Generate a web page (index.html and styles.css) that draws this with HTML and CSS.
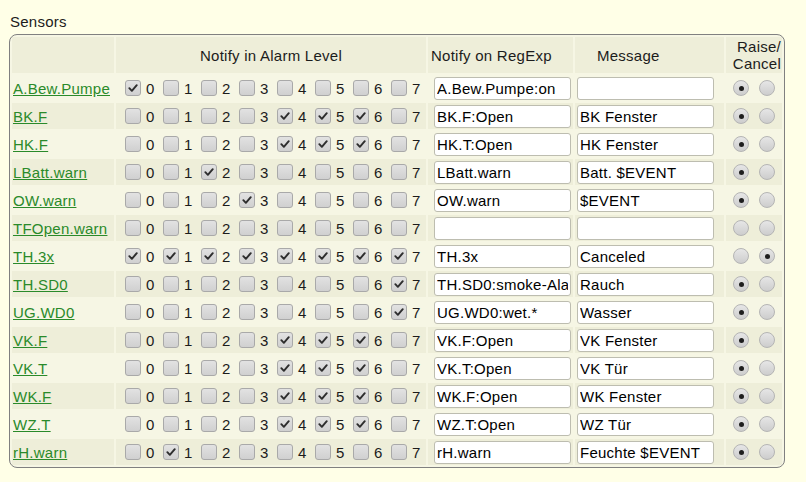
FILE: index.html
```html
<!DOCTYPE html>
<html>
<head>
<meta charset="utf-8">
<link rel="stylesheet" href="styles.css">
</head>
<body>
<div class="page">
<div class="title">Sensors</div>
<table class="block">
<colgroup><col class="w-name"><col class="w-lvl"><col class="w-re"><col class="w-msg"><col class="w-rc"></colgroup>
<tr class="head"><th></th><th class="h-lvl">Notify in Alarm Level</th><th class="h-re">Notify on RegExp</th><th class="h-msg">Message</th><th class="h-rc">Raise/<br>Cancel</th></tr>
<tr><td class="name"><a href="#">A.Bew.Pumpe</a></td><td><div class="levels"><label class="lv"><span class="cb on"><svg viewBox="0 0 16 16"><path d="M3.8 8.2l2.9 3L12.3 4.8"/></svg></span>0</label><label class="lv"><span class="cb"></span>1</label><label class="lv"><span class="cb"></span>2</label><label class="lv"><span class="cb"></span>3</label><label class="lv"><span class="cb"></span>4</label><label class="lv"><span class="cb"></span>5</label><label class="lv"><span class="cb"></span>6</label><label class="lv"><span class="cb"></span>7</label></div></td><td class="re"><input type="text" value="A.Bew.Pumpe:on"></td><td class="msg"><input type="text" value=""></td><td><div class="radios"><span class="rb on"></span><span class="rb"></span></div></td></tr>
<tr><td class="name"><a href="#">BK.F</a></td><td><div class="levels"><label class="lv"><span class="cb"></span>0</label><label class="lv"><span class="cb"></span>1</label><label class="lv"><span class="cb"></span>2</label><label class="lv"><span class="cb"></span>3</label><label class="lv"><span class="cb on"><svg viewBox="0 0 16 16"><path d="M3.8 8.2l2.9 3L12.3 4.8"/></svg></span>4</label><label class="lv"><span class="cb on"><svg viewBox="0 0 16 16"><path d="M3.8 8.2l2.9 3L12.3 4.8"/></svg></span>5</label><label class="lv"><span class="cb on"><svg viewBox="0 0 16 16"><path d="M3.8 8.2l2.9 3L12.3 4.8"/></svg></span>6</label><label class="lv"><span class="cb"></span>7</label></div></td><td class="re"><input type="text" value="BK.F:Open"></td><td class="msg"><input type="text" value="BK Fenster"></td><td><div class="radios"><span class="rb on"></span><span class="rb"></span></div></td></tr>
<tr><td class="name"><a href="#">HK.F</a></td><td><div class="levels"><label class="lv"><span class="cb"></span>0</label><label class="lv"><span class="cb"></span>1</label><label class="lv"><span class="cb"></span>2</label><label class="lv"><span class="cb"></span>3</label><label class="lv"><span class="cb on"><svg viewBox="0 0 16 16"><path d="M3.8 8.2l2.9 3L12.3 4.8"/></svg></span>4</label><label class="lv"><span class="cb on"><svg viewBox="0 0 16 16"><path d="M3.8 8.2l2.9 3L12.3 4.8"/></svg></span>5</label><label class="lv"><span class="cb on"><svg viewBox="0 0 16 16"><path d="M3.8 8.2l2.9 3L12.3 4.8"/></svg></span>6</label><label class="lv"><span class="cb"></span>7</label></div></td><td class="re"><input type="text" value="HK.T:Open"></td><td class="msg"><input type="text" value="HK Fenster"></td><td><div class="radios"><span class="rb on"></span><span class="rb"></span></div></td></tr>
<tr><td class="name"><a href="#">LBatt.warn</a></td><td><div class="levels"><label class="lv"><span class="cb"></span>0</label><label class="lv"><span class="cb"></span>1</label><label class="lv"><span class="cb on"><svg viewBox="0 0 16 16"><path d="M3.8 8.2l2.9 3L12.3 4.8"/></svg></span>2</label><label class="lv"><span class="cb"></span>3</label><label class="lv"><span class="cb"></span>4</label><label class="lv"><span class="cb"></span>5</label><label class="lv"><span class="cb"></span>6</label><label class="lv"><span class="cb"></span>7</label></div></td><td class="re"><input type="text" value="LBatt.warn"></td><td class="msg"><input type="text" value="Batt. $EVENT"></td><td><div class="radios"><span class="rb on"></span><span class="rb"></span></div></td></tr>
<tr><td class="name"><a href="#">OW.warn</a></td><td><div class="levels"><label class="lv"><span class="cb"></span>0</label><label class="lv"><span class="cb"></span>1</label><label class="lv"><span class="cb"></span>2</label><label class="lv"><span class="cb on"><svg viewBox="0 0 16 16"><path d="M3.8 8.2l2.9 3L12.3 4.8"/></svg></span>3</label><label class="lv"><span class="cb"></span>4</label><label class="lv"><span class="cb"></span>5</label><label class="lv"><span class="cb"></span>6</label><label class="lv"><span class="cb"></span>7</label></div></td><td class="re"><input type="text" value="OW.warn"></td><td class="msg"><input type="text" value="$EVENT"></td><td><div class="radios"><span class="rb on"></span><span class="rb"></span></div></td></tr>
<tr><td class="name"><a href="#">TFOpen.warn</a></td><td><div class="levels"><label class="lv"><span class="cb"></span>0</label><label class="lv"><span class="cb"></span>1</label><label class="lv"><span class="cb"></span>2</label><label class="lv"><span class="cb"></span>3</label><label class="lv"><span class="cb"></span>4</label><label class="lv"><span class="cb"></span>5</label><label class="lv"><span class="cb"></span>6</label><label class="lv"><span class="cb"></span>7</label></div></td><td class="re"><input type="text" value=""></td><td class="msg"><input type="text" value=""></td><td><div class="radios"><span class="rb"></span><span class="rb"></span></div></td></tr>
<tr><td class="name"><a href="#">TH.3x</a></td><td><div class="levels"><label class="lv"><span class="cb on"><svg viewBox="0 0 16 16"><path d="M3.8 8.2l2.9 3L12.3 4.8"/></svg></span>0</label><label class="lv"><span class="cb on"><svg viewBox="0 0 16 16"><path d="M3.8 8.2l2.9 3L12.3 4.8"/></svg></span>1</label><label class="lv"><span class="cb on"><svg viewBox="0 0 16 16"><path d="M3.8 8.2l2.9 3L12.3 4.8"/></svg></span>2</label><label class="lv"><span class="cb on"><svg viewBox="0 0 16 16"><path d="M3.8 8.2l2.9 3L12.3 4.8"/></svg></span>3</label><label class="lv"><span class="cb on"><svg viewBox="0 0 16 16"><path d="M3.8 8.2l2.9 3L12.3 4.8"/></svg></span>4</label><label class="lv"><span class="cb on"><svg viewBox="0 0 16 16"><path d="M3.8 8.2l2.9 3L12.3 4.8"/></svg></span>5</label><label class="lv"><span class="cb on"><svg viewBox="0 0 16 16"><path d="M3.8 8.2l2.9 3L12.3 4.8"/></svg></span>6</label><label class="lv"><span class="cb on"><svg viewBox="0 0 16 16"><path d="M3.8 8.2l2.9 3L12.3 4.8"/></svg></span>7</label></div></td><td class="re"><input type="text" value="TH.3x"></td><td class="msg"><input type="text" value="Canceled"></td><td><div class="radios"><span class="rb"></span><span class="rb on"></span></div></td></tr>
<tr><td class="name"><a href="#">TH.SD0</a></td><td><div class="levels"><label class="lv"><span class="cb"></span>0</label><label class="lv"><span class="cb"></span>1</label><label class="lv"><span class="cb"></span>2</label><label class="lv"><span class="cb"></span>3</label><label class="lv"><span class="cb"></span>4</label><label class="lv"><span class="cb"></span>5</label><label class="lv"><span class="cb"></span>6</label><label class="lv"><span class="cb on"><svg viewBox="0 0 16 16"><path d="M3.8 8.2l2.9 3L12.3 4.8"/></svg></span>7</label></div></td><td class="re"><input type="text" value="TH.SD0:smoke-Alarm"></td><td class="msg"><input type="text" value="Rauch"></td><td><div class="radios"><span class="rb on"></span><span class="rb"></span></div></td></tr>
<tr><td class="name"><a href="#">UG.WD0</a></td><td><div class="levels"><label class="lv"><span class="cb"></span>0</label><label class="lv"><span class="cb"></span>1</label><label class="lv"><span class="cb"></span>2</label><label class="lv"><span class="cb"></span>3</label><label class="lv"><span class="cb"></span>4</label><label class="lv"><span class="cb"></span>5</label><label class="lv"><span class="cb"></span>6</label><label class="lv"><span class="cb on"><svg viewBox="0 0 16 16"><path d="M3.8 8.2l2.9 3L12.3 4.8"/></svg></span>7</label></div></td><td class="re"><input type="text" value="UG.WD0:wet.*"></td><td class="msg"><input type="text" value="Wasser"></td><td><div class="radios"><span class="rb on"></span><span class="rb"></span></div></td></tr>
<tr><td class="name"><a href="#">VK.F</a></td><td><div class="levels"><label class="lv"><span class="cb"></span>0</label><label class="lv"><span class="cb"></span>1</label><label class="lv"><span class="cb"></span>2</label><label class="lv"><span class="cb"></span>3</label><label class="lv"><span class="cb on"><svg viewBox="0 0 16 16"><path d="M3.8 8.2l2.9 3L12.3 4.8"/></svg></span>4</label><label class="lv"><span class="cb on"><svg viewBox="0 0 16 16"><path d="M3.8 8.2l2.9 3L12.3 4.8"/></svg></span>5</label><label class="lv"><span class="cb on"><svg viewBox="0 0 16 16"><path d="M3.8 8.2l2.9 3L12.3 4.8"/></svg></span>6</label><label class="lv"><span class="cb"></span>7</label></div></td><td class="re"><input type="text" value="VK.F:Open"></td><td class="msg"><input type="text" value="VK Fenster"></td><td><div class="radios"><span class="rb on"></span><span class="rb"></span></div></td></tr>
<tr><td class="name"><a href="#">VK.T</a></td><td><div class="levels"><label class="lv"><span class="cb"></span>0</label><label class="lv"><span class="cb"></span>1</label><label class="lv"><span class="cb"></span>2</label><label class="lv"><span class="cb"></span>3</label><label class="lv"><span class="cb on"><svg viewBox="0 0 16 16"><path d="M3.8 8.2l2.9 3L12.3 4.8"/></svg></span>4</label><label class="lv"><span class="cb on"><svg viewBox="0 0 16 16"><path d="M3.8 8.2l2.9 3L12.3 4.8"/></svg></span>5</label><label class="lv"><span class="cb on"><svg viewBox="0 0 16 16"><path d="M3.8 8.2l2.9 3L12.3 4.8"/></svg></span>6</label><label class="lv"><span class="cb"></span>7</label></div></td><td class="re"><input type="text" value="VK.T:Open"></td><td class="msg"><input type="text" value="VK Tür"></td><td><div class="radios"><span class="rb on"></span><span class="rb"></span></div></td></tr>
<tr><td class="name"><a href="#">WK.F</a></td><td><div class="levels"><label class="lv"><span class="cb"></span>0</label><label class="lv"><span class="cb"></span>1</label><label class="lv"><span class="cb"></span>2</label><label class="lv"><span class="cb"></span>3</label><label class="lv"><span class="cb on"><svg viewBox="0 0 16 16"><path d="M3.8 8.2l2.9 3L12.3 4.8"/></svg></span>4</label><label class="lv"><span class="cb on"><svg viewBox="0 0 16 16"><path d="M3.8 8.2l2.9 3L12.3 4.8"/></svg></span>5</label><label class="lv"><span class="cb on"><svg viewBox="0 0 16 16"><path d="M3.8 8.2l2.9 3L12.3 4.8"/></svg></span>6</label><label class="lv"><span class="cb"></span>7</label></div></td><td class="re"><input type="text" value="WK.F:Open"></td><td class="msg"><input type="text" value="WK Fenster"></td><td><div class="radios"><span class="rb on"></span><span class="rb"></span></div></td></tr>
<tr><td class="name"><a href="#">WZ.T</a></td><td><div class="levels"><label class="lv"><span class="cb"></span>0</label><label class="lv"><span class="cb"></span>1</label><label class="lv"><span class="cb"></span>2</label><label class="lv"><span class="cb"></span>3</label><label class="lv"><span class="cb on"><svg viewBox="0 0 16 16"><path d="M3.8 8.2l2.9 3L12.3 4.8"/></svg></span>4</label><label class="lv"><span class="cb on"><svg viewBox="0 0 16 16"><path d="M3.8 8.2l2.9 3L12.3 4.8"/></svg></span>5</label><label class="lv"><span class="cb on"><svg viewBox="0 0 16 16"><path d="M3.8 8.2l2.9 3L12.3 4.8"/></svg></span>6</label><label class="lv"><span class="cb"></span>7</label></div></td><td class="re"><input type="text" value="WZ.T:Open"></td><td class="msg"><input type="text" value="WZ Tür"></td><td><div class="radios"><span class="rb on"></span><span class="rb"></span></div></td></tr>
<tr><td class="name"><a href="#">rH.warn</a></td><td><div class="levels"><label class="lv"><span class="cb"></span>0</label><label class="lv"><span class="cb on"><svg viewBox="0 0 16 16"><path d="M3.8 8.2l2.9 3L12.3 4.8"/></svg></span>1</label><label class="lv"><span class="cb"></span>2</label><label class="lv"><span class="cb"></span>3</label><label class="lv"><span class="cb"></span>4</label><label class="lv"><span class="cb"></span>5</label><label class="lv"><span class="cb"></span>6</label><label class="lv"><span class="cb"></span>7</label></div></td><td class="re"><input type="text" value="rH.warn"></td><td class="msg"><input type="text" value="Feuchte $EVENT"></td><td><div class="radios"><span class="rb on"></span><span class="rb"></span></div></td></tr>
</table>
</div>
</body>
</html>
```
FILE: styles.css
```css
body {
  margin: 0;
  background: #FFFFE7;
  font-family: "Liberation Sans", Arial, sans-serif;
  font-size: 15px;
  letter-spacing: 0.25px;
  color: #1c1c1c;
}
.page {
  padding: 13px 0 0 9px;
}
.title {
  height: 18px;
  line-height: 18px;
  padding-left: 1px;
  margin-bottom: 3px;
}
table.block {
  border: 1px solid #808080;
  border-radius: 8px;
  border-spacing: 2px;
  background: #F6F6E4;
  table-layout: fixed;
  width: 776px;
}
.w-name { width: 102px; }
.w-lvl { width: 310px; }
.w-re { width: 145px; }
.w-msg { width: 149px; }
.w-rc { width: 56px; }
tr:nth-child(odd) > td,
tr:nth-child(odd) > th {
  background: #EEEED9;
}
th {
  font-weight: normal;
  height: 36px;
  padding: 0;
  vertical-align: middle;
  line-height: 17px;
}
.h-lvl { text-align: center; }
.h-re { text-align: left; padding-left: 3px; }
.h-msg { text-align: left; padding-left: 22px; }
.h-rc { text-align: right; padding-right: 1px; }
td {
  height: 26px;
  padding: 0;
  vertical-align: middle;
}
td.name {
  padding-left: 1px;
  white-space: nowrap;
  overflow: hidden;
}
td.name a {
  color: #2A8A2A;
  text-decoration: underline;
}
.levels {
  display: flex;
  padding-left: 9px;
}
.lv {
  width: 38px;
  display: flex;
  align-items: center;
  flex: none;
}
.cb {
  width: 16px;
  height: 16px;
  box-sizing: border-box;
  border: 1px solid #A9A9A9;
  border-radius: 3px;
  background: linear-gradient(#E2E2E2, #D0D0D0);
  margin-right: 5px;
  display: flex;
  flex: none;
}
.cb svg {
  width: 14px;
  height: 14px;
}
.cb path {
  fill: none;
  stroke: #2E2E2E;
  stroke-width: 2.2;
  stroke-linecap: round;
  stroke-linejoin: round;
}
td.re { padding-left: 6px; }
td.msg { padding-left: 2px; }
td input {
  display: block;
  box-sizing: border-box;
  width: 137px;
  height: 23px;
  margin: 0;
  border: 1px solid #BDBDB0;
  border-radius: 3px;
  background: #fff;
  padding: 0 2px;
  font-family: "Liberation Sans", Arial, sans-serif;
  font-size: 15px;
  letter-spacing: 0.25px;
  color: #000;
  outline: none;
}
.radios {
  display: flex;
  gap: 10px;
  padding-left: 7px;
}
.rb {
  width: 16px;
  height: 16px;
  box-sizing: border-box;
  border: 1px solid #B4B4B4;
  border-radius: 50%;
  background: linear-gradient(#E6E6E6, #CDCDCD);
  display: flex;
  align-items: center;
  justify-content: center;
  flex: none;
}
.rb.on::after {
  content: "";
  width: 5px;
  height: 5px;
  border-radius: 50%;
  background: #1E1E1E;
}
```
